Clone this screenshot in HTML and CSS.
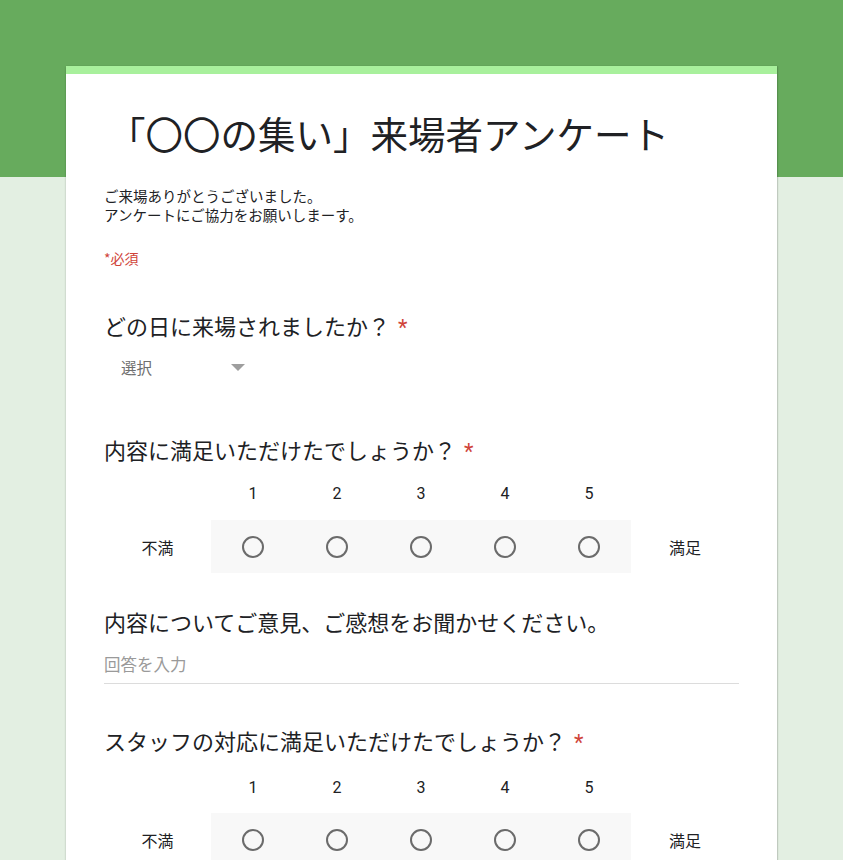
FILE: index.html
```html
<!DOCTYPE html>
<html lang="ja">
<head>
<meta charset="utf-8">
<title>来場者アンケート</title>
<link rel="stylesheet" href="styles.css">
</head>
<body>
<div class="page">
  <div class="header-band"></div>
  <main class="card">
    <h1 class="title">「〇〇の集い」来場者アンケート</h1>
    <p class="desc">ご来場ありがとうございました。<br>アンケートにご協力をお願いしまーす。</p>
    <p class="required-note">*必須</p>

    <section class="q q-first">
      <h2 class="q-title">どの日に来場されましたか？<span class="star">*</span></h2>
      <div class="select">
        <span class="select-text">選択</span>
        <span class="select-arrow"></span>
      </div>
    </section>

    <section class="q q-scale">
      <h2 class="q-title">内容に満足いただけたでしょうか？<span class="star">*</span></h2>
      <div class="scale">
        <div class="nums">
          <span></span><span>1</span><span>2</span><span>3</span><span>4</span><span>5</span><span></span>
        </div>
        <div class="scale-row">
          <span class="end-label">不満</span>
          <div class="radios">
            <span class="radio"></span><span class="radio"></span><span class="radio"></span><span class="radio"></span><span class="radio"></span>
          </div>
          <span class="end-label">満足</span>
        </div>
      </div>
    </section>

    <section class="q q-text">
      <h2 class="q-title">内容についてご意見、ご感想をお聞かせください。</h2>
      <div class="text-input">回答を入力</div>
    </section>

    <section class="q q-scale q-last">
      <h2 class="q-title">スタッフの対応に満足いただけたでしょうか？<span class="star">*</span></h2>
      <div class="scale">
        <div class="nums">
          <span></span><span>1</span><span>2</span><span>3</span><span>4</span><span>5</span><span></span>
        </div>
        <div class="scale-row">
          <span class="end-label">不満</span>
          <div class="radios">
            <span class="radio"></span><span class="radio"></span><span class="radio"></span><span class="radio"></span><span class="radio"></span>
          </div>
          <span class="end-label">満足</span>
        </div>
      </div>
    </section>
  </main>
</div>
</body>
</html>
```

FILE: styles.css
```css
* { box-sizing: border-box; }
html, body {
  margin: 0;
  padding: 0;
}
body {
  background: #e3efe2;
  font-family: "Noto Sans CJK JP", "Noto Sans", sans-serif;
  color: #202124;
  height: 860px;
  overflow: hidden;
}
.page {
  position: relative;
  min-height: 860px;
}
.header-band {
  height: 177px;
  background: #67ab5d;
}
.card {
  position: relative;
  margin: -111px auto 0 66px;
  width: 711px;
  background: #fff;
  border-top: 8px solid #a8f09c;
  box-shadow: 0 1px 2px rgba(0,0,0,0.25), 1px 0 1px rgba(0,0,0,0.08);
  padding: 35px 38px 40px 38px;
  min-height: 900px;
}
.title {
  margin: 0 0 0 4px;
  font-size: 37.5px;
  line-height: 48px;
  font-weight: 400;
  color: #202124;
}
.desc {
  margin: 29px 0 0 0;
  font-size: 14.5px;
  line-height: 19px;
  color: #202124;
}
.required-note {
  margin: 25px 0 0 0;
  font-size: 14px;
  line-height: 19px;
  color: #d0443a;
}
.q-title {
  margin: 0;
  font-size: 22px;
  line-height: 30px;
  font-weight: 400;
  color: #202124;
}
.star {
  color: #d0443a;
  margin-left: 8px;
  font-family: "Roboto", sans-serif;
}
.q-first { margin-top: 42px; }
.select {
  margin-top: 14px;
  display: flex;
  align-items: center;
  height: 20px;
  padding-left: 17px;
}
.select-text {
  font-size: 15.5px;
  line-height: 20px;
  color: #6f6f6f;
  width: 110px;
}
.select-arrow {
  width: 0;
  height: 0;
  border-left: 7px solid transparent;
  border-right: 7px solid transparent;
  border-top: 7px solid #9e9e9e;
}
.q-scale { margin-top: 57px; }
.scale { margin-top: 17px; }
.nums, .scale-row {
  display: grid;
  grid-template-columns: 107px 420px 108px;
}
.nums {
  grid-template-columns: 107px repeat(5, 84px) 108px;
  font-family: "Roboto", sans-serif;
  font-size: 16px;
  line-height: 20px;
  text-align: center;
  color: #202124;
}
.scale-row {
  margin-top: 16px;
  height: 53px;
  align-items: center;
}
.end-label {
  text-align: center;
  font-size: 16px;
  line-height: 20px;
}
.radios {
  height: 53px;
  background: #f8f8f8;
  display: grid;
  grid-template-columns: repeat(5, 84px);
  align-items: center;
  justify-items: center;
}
.radio {
  width: 22px;
  height: 22px;
  border: 2px solid #6b6b6b;
  border-radius: 50%;
}
.q-text { margin-top: 33px; }
.text-input {
  margin-top: 18px;
  font-size: 16.5px;
  line-height: 20px;
  color: #9a9a9a;
  padding-bottom: 9px;
  border-bottom: 1px solid #dcdcdc;
}
.q-last { margin-top: 41px; }
.q-last .scale { margin-top: 20px; }
.q-last .scale-row { margin-top: 15px; }
```
